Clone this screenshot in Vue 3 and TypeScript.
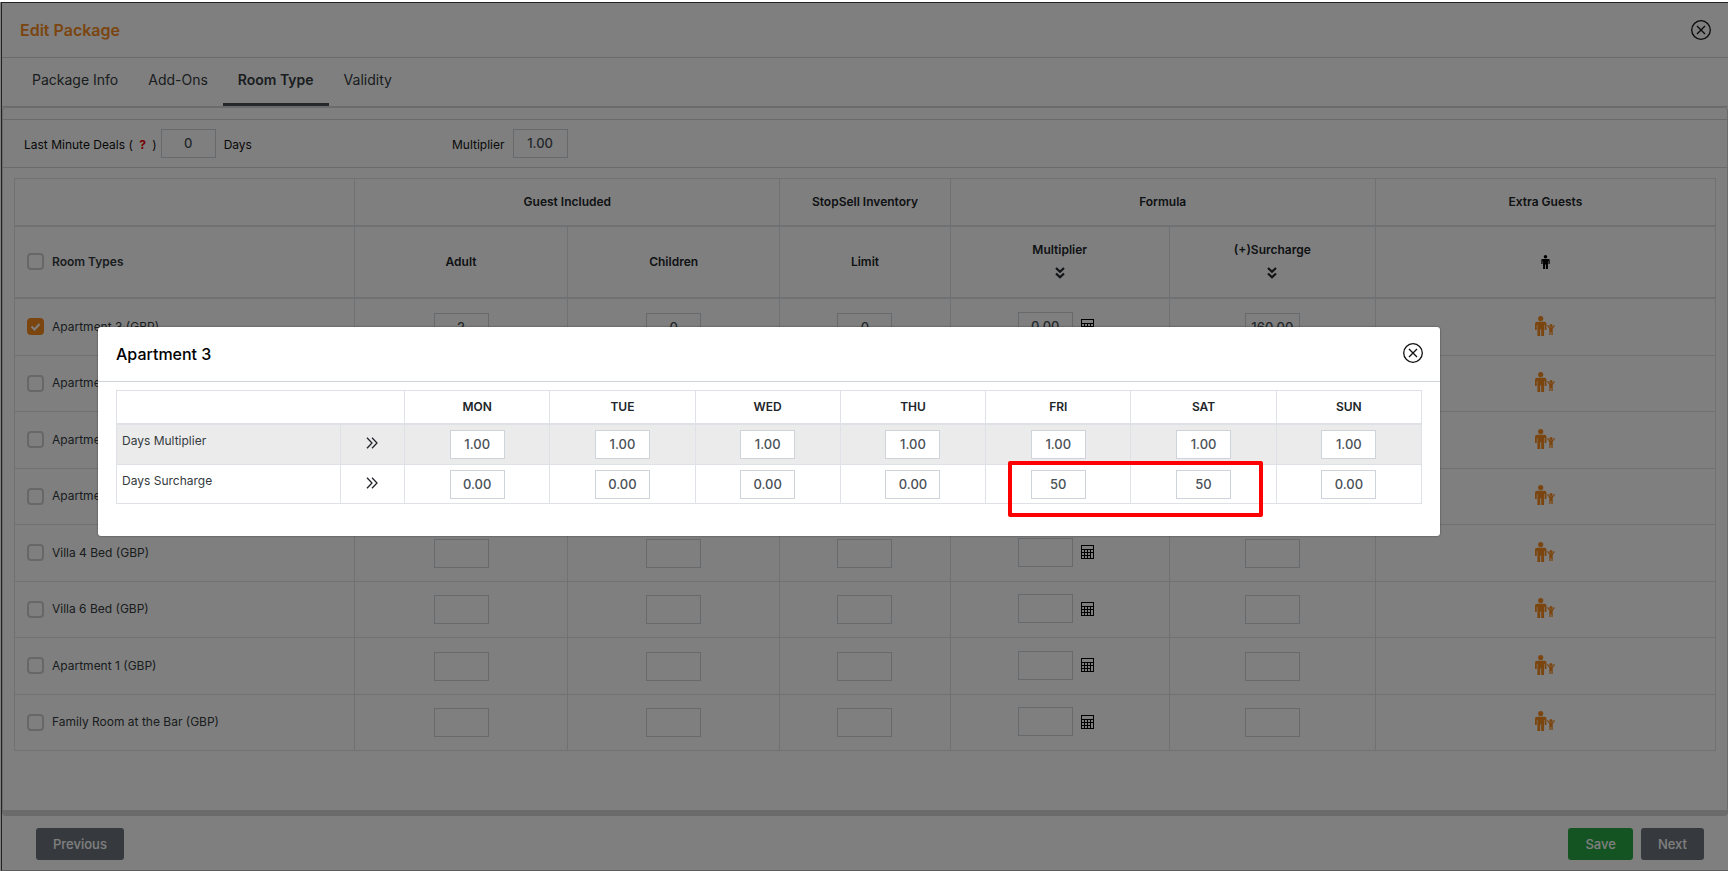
<script setup lang="ts">
import { ref } from 'vue'

interface RoomRow {
  name: string
  checked: boolean
  adult: string
  children: string
  limit: string
  multiplier: string
  surcharge: string
}

const tabs = ['Package Info', 'Add-Ons', 'Room Type', 'Validity']
const activeTab = ref('Room Type')

const emptyRow = (name: string): RoomRow => ({
  name,
  checked: false,
  adult: '',
  children: '',
  limit: '',
  multiplier: '',
  surcharge: '',
})

const rooms = ref<RoomRow[]>([
  {
    name: 'Apartment 3 (GBP)',
    checked: true,
    adult: '2',
    children: '0',
    limit: '0',
    multiplier: '0.00',
    surcharge: '160.00',
  },
  emptyRow('Apartment 4 (GBP)'),
  emptyRow('Apartment 5 (GBP)'),
  emptyRow('Apartment 2 (GBP)'),
  emptyRow('Villa 4 Bed (GBP)'),
  emptyRow('Villa 6 Bed (GBP)'),
  emptyRow('Apartment 1 (GBP)'),
  emptyRow('Family Room at the Bar (GBP)'),
])

const lastMinute = ref('0')
const baseMultiplier = ref('1.00')
const allChecked = ref(false)

const days = ['MON', 'TUE', 'WED', 'THU', 'FRI', 'SAT', 'SUN']
const dayRows = ref([
  { label: 'Days Multiplier', values: ['1.00', '1.00', '1.00', '1.00', '1.00', '1.00', '1.00'] },
  { label: 'Days Surcharge', values: ['0.00', '0.00', '0.00', '0.00', '50', '50', '0.00'] },
])
</script>

<template>
  <div class="page">
    <main class="panel">
      <header class="panel-head">
        <h1>Edit Package</h1>
        <button class="close" type="button" aria-label="Close package">
          <svg width="20" height="20" viewBox="0 0 20 20" fill="none" stroke="currentColor">
            <circle cx="10" cy="10" r="9.3" stroke-width="1.3" />
            <path d="M6 6l8 8M14 6l-8 8" stroke-width="1.3" />
          </svg>
        </button>
      </header>

      <nav class="tabs">
        <button
          v-for="tab in tabs"
          :key="tab"
          type="button"
          :class="['tab', { active: tab === activeTab }]"
          @click="activeTab = tab"
        >
          {{ tab }}
        </button>
      </nav>

      <section class="content">
        <div class="filters">
          <div class="filter first">
            <label for="last-minute">Last Minute Deals ( <b class="help">?</b> )</label>
            <input id="last-minute" v-model="lastMinute" class="num" type="text" />
            <span class="unit">Days</span>
          </div>
          <div class="filter second">
            <label for="base-multiplier">Multiplier</label>
            <input id="base-multiplier" v-model="baseMultiplier" class="num" type="text" />
          </div>
        </div>

        <table class="grid rooms">
          <colgroup>
            <col class="c-name" />
            <col class="c-guest" />
            <col class="c-guest" />
            <col class="c-limit" />
            <col class="c-mult" />
            <col class="c-sur" />
            <col class="c-name" />
          </colgroup>
          <thead>
            <tr class="group-row">
              <th></th>
              <th colspan="2">Guest Included</th>
              <th>StopSell Inventory</th>
              <th colspan="2">Formula</th>
              <th>Extra Guests</th>
            </tr>
            <tr class="label-row">
              <th>
                <label class="pick">
                  <input v-model="allChecked" type="checkbox" />
                  <span>Room Types</span>
                </label>
              </th>
              <th>Adult</th>
              <th>Children</th>
              <th>Limit</th>
              <th v-for="title in ['Multiplier', '(+)Surcharge']" :key="title">
                <div class="fill-down">
                  <span>{{ title }}</span>
                  <button type="button" :aria-label="'Fill down ' + title">
                    <svg width="10" height="12" viewBox="0 0 10 12" fill="none" stroke="currentColor" stroke-width="2.2">
                      <path d="M1 1l4 3.800L9 1M1 6.500l4 3.800L9 6.500" />
                    </svg>
                  </button>
                </div>
              </th>
              <th>
                <svg class="icon" width="9" height="14" viewBox="0 0 12 20" fill="#000">
                  <circle cx="6" cy="2.500" r="2.500" />
                  <path d="M2 5.600h8q2 0 2 2V13h-1.800V8.500H9.500V20H6.600v-6.500H5.400V20H2.500V8.500h-.7V13H0V7.600q0-2 2-2z" />
                </svg>
              </th>
            </tr>
          </thead>
          <tbody>
            <tr v-for="room in rooms" :key="room.name">
              <td class="name">
                <label class="pick">
                  <input v-model="room.checked" type="checkbox" />
                  <span>{{ room.name }}</span>
                </label>
              </td>
              <td><input v-model="room.adult" class="num" type="text" :aria-label="room.name + ' adults'" /></td>
              <td><input v-model="room.children" class="num" type="text" :aria-label="room.name + ' children'" /></td>
              <td><input v-model="room.limit" class="num" type="text" :aria-label="room.name + ' limit'" /></td>
              <td>
                <div class="with-calc">
                  <input v-model="room.multiplier" class="num" type="text" :aria-label="room.name + ' multiplier'" />
                  <button type="button" :aria-label="room.name + ' day rates'">
                    <svg width="13" height="14" viewBox="0 0 13 14" fill="none" stroke="#000" shape-rendering="crispEdges">
                      <path d="M.5 .5h12v13H.5zM0 4.500h13M0 7.500h10M0 10.500h10M3.500 4.500v9M6.500 4.500v9M9.500 4.500v9M9.500 7.500h3" />
                    </svg>
                  </button>
                </div>
              </td>
              <td><input v-model="room.surcharge" class="num" type="text" :aria-label="room.name + ' surcharge'" /></td>
              <td>
                <button class="guests" type="button" :aria-label="room.name + ' extra guests'">
                  <svg width="20" height="20" viewBox="0 0 20 20" fill="currentColor">
                    <circle cx="5.700" cy="2.600" r="2.600" />
                    <path d="M2 5.800h7.500q2 0 2 2V14H9.700V9h-.6v11H6.200v-6.500h-1V20H2.400V9h-.6v5H0V7.800q0-2 2-2z" />
                    <circle cx="16" cy="9.500" r="1.600" />
                    <path d="M12.900 9l2 2.300h2.200l2-2.300.9.700-2.300 3.100V19h-1.300v-3h-.8v3h-1.300v-6.200L12 9.700z" />
                  </svg>
                </button>
              </td>
            </tr>
          </tbody>
        </table>
      </section>

      <footer class="panel-foot">
        <button class="btn" type="button">Previous</button>
        <span class="spacer"></span>
        <button class="btn save" type="button">Save</button>
        <button class="btn" type="button">Next</button>
      </footer>
    </main>

    <div class="backdrop"></div>

    <div class="modal" role="dialog" aria-labelledby="modal-title">
      <header class="modal-head">
        <h2 id="modal-title">Apartment 3</h2>
        <button class="close" type="button" aria-label="Close day rates">
          <svg width="20" height="20" viewBox="0 0 20 20" fill="none" stroke="currentColor">
            <circle cx="10" cy="10" r="9.3" stroke-width="1.3" />
            <path d="M6 6l8 8M14 6l-8 8" stroke-width="1.3" />
          </svg>
        </button>
      </header>
      <div class="modal-body">
        <table class="grid rates">
          <colgroup>
            <col class="d-label" />
            <col class="d-fill" />
            <col v-for="day in days" :key="day" />
          </colgroup>
          <thead>
            <tr>
              <th colspan="2"></th>
              <th v-for="day in days" :key="day">{{ day }}</th>
            </tr>
          </thead>
          <tbody>
            <tr v-for="row in dayRows" :key="row.label">
              <td class="rate-label">{{ row.label }}</td>
              <td>
                <button class="fill-right" type="button" :aria-label="'Fill ' + row.label">
                  <svg width="12" height="12" viewBox="0 0 12 12" fill="none" stroke="currentColor" stroke-width="1.300">
                    <path d="M1 .7L6 6l-5 5.300M6 .7L11 6l-5 5.300" />
                  </svg>
                </button>
              </td>
              <td v-for="(day, i) in days" :key="day">
                <input v-model="row.values[i]" class="num" type="text" :aria-label="row.label + ' ' + day" />
              </td>
            </tr>
          </tbody>
        </table>
        <div class="highlight"></div>
      </div>
    </div>
  </div>
</template>

<style>
body {
  margin: 0;
}
</style>

<style scoped>
.page,
.page * {
  box-sizing: border-box;
}

.page {
  position: relative;
  display: flex;
  flex-direction: column;
  min-height: 100vh;
  padding: 2px 0 0 1px;
  background: #fff;
  color: #212529;
  font-family: Inter, 'Liberation Sans', sans-serif;
  font-size: 12px;
  line-height: 18px;
}

button {
  padding: 0;
  border: 0;
  background: none;
  color: inherit;
  font: inherit;
  cursor: pointer;
}

svg {
  display: block;
}

.panel {
  flex: 1;
  display: flex;
  flex-direction: column;
  border: 1px solid #444;
  border-right: 0;
  border-bottom-color: #bbb;
  background: #fff;
}

.panel-head {
  display: flex;
  align-items: center;
  justify-content: space-between;
  height: 55px;
  padding: 0 17px 0 18px;
  border-bottom: 1px solid #d6d6d6;
}

h1,
h2 {
  margin: 0;
  font-size: 16px;
  line-height: 24px;
}

h1 {
  color: #f68b1f;
  font-weight: 600;
}

h2 {
  color: #000;
  font-weight: 500;
}

.close {
  color: #111;
}

.tabs {
  display: flex;
  height: 49px;
  padding-left: 15px;
  border-bottom: 1px solid #d6d6d6;
}

.tab {
  padding: 0 15px 2px;
  border-bottom: 3px solid transparent;
  color: #343a40;
  font-size: 14px;
  line-height: 20px;
}

.tab.active {
  border-bottom-color: #495057;
  font-weight: 600;
}

.content {
  flex: 1;
  border: 1px solid #d6d6d6;
  border-bottom: 6px solid #d6d6d6;
  border-radius: 4px;
  padding-top: 11px;
}

.filters {
  display: flex;
  align-items: center;
  height: 49px;
  padding-left: 21px;
  border-top: 1px solid #d6d6d6;
  border-bottom: 1px solid #d6d6d6;
}

.filter {
  display: flex;
  align-items: center;
  color: #111;
}

.filter.first {
  width: 428px;
  gap: 4px;
}

.filter.second {
  gap: 8px;
}

.filter label,
.unit {
  padding-top: 2px;
}

.unit {
  padding-left: 4px;
}

.help {
  margin: 0 3px;
  color: #e00;
}

.num {
  width: 55px;
  height: 29px;
  padding: 0 0 1px;
  border: 1px solid #ced4da;
  border-radius: 0;
  background: transparent;
  color: #495057;
  font: 500 13px/20px Inter, 'Liberation Sans', sans-serif;
  text-align: center;
}

.grid {
  table-layout: fixed;
  border-collapse: separate;
  border-spacing: 0;
  border: solid #dee2e6;
  border-width: 1px 0 0 1px;
}

.grid th,
.grid td {
  padding: 0;
  border: solid #dee2e6;
  border-width: 0 1px 1px 0;
  text-align: center;
  vertical-align: middle;
}

.grid th {
  border-bottom-width: 2px;
  font-weight: 600;
}

.rooms {
  width: calc(100% - 22px);
  margin: 10px 11px 0;
}

.c-name {
  width: 20%;
}

.c-guest {
  width: 12.5%;
}

.c-limit {
  width: 10%;
}

.c-mult {
  width: 12.9%;
}

.c-sur {
  width: 12.1%;
}

.group-row {
  height: 48px;
}

.label-row {
  height: 72px;
}

.rooms tbody tr {
  height: 57px;
}

.rooms tbody tr:nth-child(even) {
  height: 56px;
}

.pick {
  display: flex;
  align-items: center;
  gap: 8px;
  padding: 0 0 1px 12px;
  color: #343a40;
}

.pick input {
  appearance: none;
  width: 17px;
  height: 17px;
  margin: 0;
  border: 2px solid #cfcfcf;
  border-radius: 4px;
}

.pick input:checked {
  border-color: #f68b1f;
  background: #f68b1f
    url("data:image/svg+xml,%3Csvg xmlns='http://www.w3.org/2000/svg' viewBox='0 0 13 13'%3E%3Cpath d='M2.500 6.500l3 3 5-5.500' fill='none' stroke='%23fff' stroke-width='2'/%3E%3C/svg%3E")
    center / 13px 13px no-repeat;
}

.rooms .num,
.rates .num {
  display: block;
  margin: 0 auto;
}

.fill-down {
  display: flex;
  flex-direction: column;
  align-items: center;
  gap: 8px;
  padding-bottom: 4px;
}

.icon {
  margin: 0 auto;
}

.with-calc {
  display: flex;
  align-items: center;
  justify-content: center;
  gap: 8px;
  padding: 0 8px 2px 0;
}

.rooms .with-calc .num {
  margin: 0;
}

.guests {
  display: block;
  margin: 0 auto;
  padding-bottom: 3px;
  color: #f68b1f;
}

.panel-foot {
  display: flex;
  align-items: center;
  gap: 8px;
  height: 54px;
  padding: 2px 24px 0 34px;
}

.spacer {
  flex: 1;
}

.btn {
  height: 32px;
  padding: 0 17px;
  border-radius: 3px;
  background: #6c757d;
  color: #fff;
  font-size: 13px;
  font-weight: 500;
}

.btn.save {
  background: #28a745;
}

.backdrop {
  position: absolute;
  inset: 2px 0 0 0;
  background: rgba(0, 0, 0, 0.5);
}

.modal {
  position: absolute;
  top: 327px;
  left: 98px;
  right: 288px;
  border-radius: 3px;
  background: #fff;
  box-shadow: 0 0 2px rgba(0, 0, 0, 0.5);
}

.modal-head {
  display: flex;
  align-items: center;
  justify-content: space-between;
  height: 55px;
  padding: 0 17px 0 18px;
  border-bottom: 1px solid #ced4da;
}

.modal-head .close {
  padding-bottom: 2px;
}

.modal-body {
  position: relative;
  padding: 8px 18px 32px;
}

.rates {
  width: 100%;
}

.d-label {
  width: 224px;
}

.d-fill {
  width: 64px;
}

.rates thead tr {
  height: 34px;
}

.rates tbody tr {
  height: 39px;
}

.rates tbody tr:nth-child(odd) {
  height: 40px;
}

.rates tbody tr:nth-child(odd) td {
  background: #ebebeb;
}

.rates .num {
  background: #fff;
}

.grid .rate-label {
  padding: 7px 5px;
  color: #343a40;
  text-align: left;
  vertical-align: top;
}

.fill-right {
  display: block;
  margin: 0 auto;
  padding: 0 1px 3px 0;
}

.highlight {
  position: absolute;
  top: 79px;
  right: 177px;
  width: 255px;
  height: 56px;
  border: 4px solid #f00;
  border-radius: 2px;
  pointer-events: none;
}
</style>
